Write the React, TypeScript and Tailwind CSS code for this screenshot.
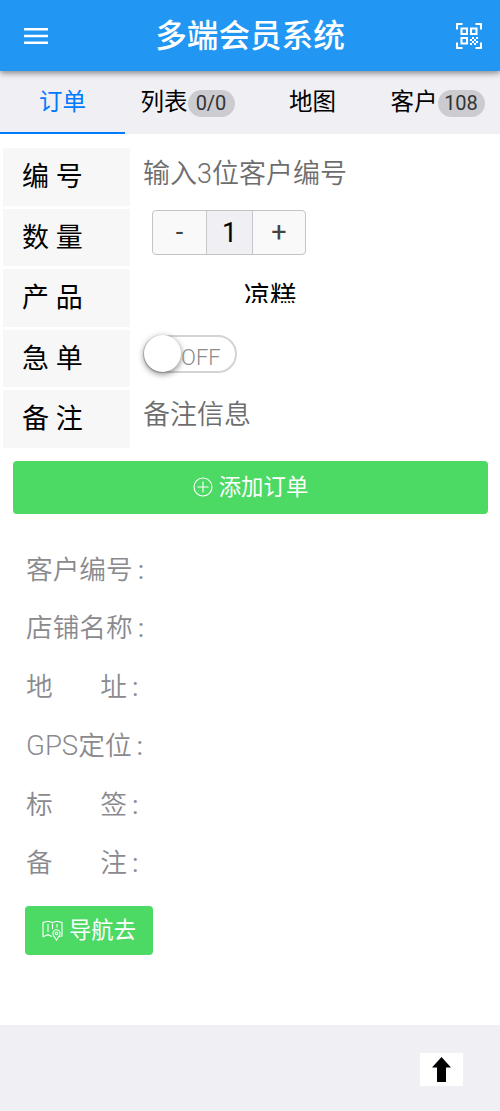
import React from 'react';

const tabs = [
  { name: '订单' },
  { name: '列表', badge: '0/0' },
  { name: '地图' },
  { name: '客户', badge: '108' }
];

const details = ['客户编号', '店铺名称', '地址', 'GPS定位', '标签', '备注'];

function MenuIcon() {
  return (
    <svg className="w-6 h-4" viewBox="0 0 24 16" fill="#fff">
      <path d="M0 0h24v2.4H0zM0 6.8h24v2.4H0zM0 13.6h24V16H0z" />
    </svg>
  );
}

function QrIcon() {
  return (
    <svg className="w-[26px] h-[26px]" viewBox="0 0 26 26" fill="none" stroke="#fff" strokeWidth="2.1">
      <path d="M1 6.5V1h5.5M19.5 1H25v5.5M25 19.5V25h-5.5M6.5 25H1v-5.5" />
      <path d="M5.5 5.5H11V11H5.5zM15 5.5h5.5V11H15zM5.5 15H11v5.5H5.5z" />
      <path
        d="M16 14h2v2h-2zM20 14h2v2h-2zM14 16h2v2h-2zM18 16h2v2h-2zM16 18h2v2h-2zM20 18h2v2h-2zM14 20h2v2h-2zM18 20h2v2h-2z"
        fill="#fff"
        stroke="none"
      />
    </svg>
  );
}

function PlusCircleIcon() {
  return (
    <svg className="w-5 h-5" viewBox="0 0 20 20" fill="none" stroke="#fff" strokeWidth="1.1">
      <circle cx="10" cy="10" r="9" />
      <path d="M10 4.5v11M4.5 10h11" />
    </svg>
  );
}

function MapIcon() {
  return (
    <svg className="w-[21px] h-[21px]" viewBox="0 0 21 21" fill="none" stroke="#fff" strokeWidth="1.1">
      <path d="M10 16.5l-4-1.8-5 2V2.5l5-1.2 4.5 1.2L15 1.3l5 1.2V16l-2.5.3" />
      <path d="M6 4v8M10.5 3.5v5.5M15 4v3.5" />
      <path d="M14.5 20.2c-1.2-2.4-3.6-4.4-3.6-6.8a3.6 3.6 0 0 1 7.2 0c0 2.4-2.4 4.4-3.6 6.8z" />
      <circle cx="14.5" cy="13.3" r="1.3" />
    </svg>
  );
}

interface FormRowProps {
  label: string;
  children: React.ReactNode;
}

function FormRow({ label, children }: FormRowProps) {
  return (
    <div className="flex h-[57.5px]">
      <div className="w-[127px] shrink-0 bg-[#f7f7f7] pl-[19px] text-black leading-[59px] whitespace-pre">
        {label}
      </div>
      <div className="flex-1 pl-[13px]">{children}</div>
    </div>
  );
}

function App() {
  return (
    <div className="w-full h-[1111px] flex flex-col bg-white overflow-hidden font-[Roboto,'Noto_Sans_CJK_SC',sans-serif]">
      {/* Header */}
      <header className="relative z-10 h-[71px] shrink-0 flex items-center justify-between pl-6 pr-[18px] bg-[#2196f3] shadow-[0_2px_6px_rgba(0,0,0,0.45)]">
        <MenuIcon />
        <h1 className="-ml-[4px] pt-[2px] text-[31.6px] leading-[71px] font-medium text-white">多端会员系统</h1>
        <QrIcon />
      </header>

      {/* Tabs */}
      <nav className="h-[63px] shrink-0 grid grid-cols-4 bg-[#efeff4]">
        {tabs.map((tab, index) => (
          <div
            key={tab.name}
            className={`h-[63px] flex justify-center text-[23.5px] leading-[62px] border-b-2 ${
              index === 0 ? 'text-[#007aff] border-[#007aff]' : 'text-black border-transparent'
            }`}
          >
            {tab.name}
            {tab.badge && (
              <span className="mt-[19px] h-[27px] w-[47px] rounded-full bg-[#cbcbd0] text-center text-[20px] leading-[27px] text-[#333]">
                {tab.badge}
              </span>
            )}
          </div>
        ))}
      </nav>

      {/* Order form */}
      <section className="mt-[14px] pl-[3px] flex flex-col gap-[3px] text-[27px]">
        <FormRow label="编 号">
          <div className="leading-[52px] text-[#6d6d6d] font-[350]">输入3位客户编号</div>
        </FormRow>
        <FormRow label="数 量">
          <div className="mt-[1px] ml-[9px] w-[154px] h-[45px] flex border border-[#c4c4c6] rounded-[4px] bg-[#f9f9f9] overflow-hidden text-center leading-[43px]">
            <button className="w-[53px] text-[#444]">-</button>
            <div className="w-[47px] border-x border-[#c8c8cc] bg-[#efeff4] text-black leading-[45px]">1</div>
            <button className="flex-1 text-[#444]">+</button>
          </div>
        </FormRow>
        <FormRow label="产 品">
          <div className="h-[34px] pt-[4px] pr-[103px] text-center text-[26.5px] leading-[46px] text-black overflow-hidden">凉糕</div>
        </FormRow>
        <FormRow label="急 单">
          <div className="mt-[5px] w-[94px] h-[38px] flex items-center border-2 border-[#d4d4d4] rounded-full">
            <div className="-ml-[1px] w-[37px] h-[37px] shrink-0 rounded-full bg-white shadow-[0_2px_6px_rgba(0,0,0,0.5)]" />
            <span className="pt-[8px] text-[22px] leading-[30px] font-[350] text-[#8c8c8c]">OFF</span>
          </div>
        </FormRow>
        <FormRow label="备 注">
          <div className="leading-[50px] text-[#6d6d6d] font-[350]">备注信息</div>
        </FormRow>
      </section>

      <button className="mt-[13px] ml-[13px] mr-3 h-[53px] shrink-0 flex items-center justify-center gap-[6px] rounded-[4px] bg-[#4cd964] text-white text-[22.4px]">
        <PlusCircleIcon />
        <span className="pt-[1px]">添加订单</span>
      </button>

      {/* Customer details */}
      <section className="mt-[27px] pl-[26px] text-[26.7px] font-[350] text-[#8a8a8e]">
        {details.map((name) => (
          <div key={name} className="flex h-[58.8px] leading-[58.8px]">
            {name.length === 2 ? (
              <span className="w-[101px] flex justify-between">
                <span>{name[0]}</span>
                <span>{name[1]}</span>
              </span>
            ) : name.startsWith('GPS') ? (
              <span>
                <span className="text-[27.6px]">GPS</span>
                {name.slice(3)}
              </span>
            ) : (
              <span>{name}</span>
            )}
            <span className="ml-[5px] font-normal">:</span>
          </div>
        ))}
        <button className="-ml-[1px] mt-[13px] w-[128px] h-[49px] flex items-center justify-center gap-[6px] rounded-[4px] bg-[#4cd964] text-white text-[22.3px] font-normal">
          <MapIcon />
          <span>导航去</span>
        </button>
      </section>

      {/* Back to top */}
      <footer className="mt-auto h-[86px] shrink-0 flex justify-end pt-[28px] pr-[37px] bg-[#efeff4]">
        <div className="w-[43px] h-[33px] flex items-center justify-center bg-white">
          <svg className="w-[19px] h-[25px]" viewBox="0 0 19 25" fill="#000">
            <path d="M9.5 0L19 10.5h-5V25H5V10.5H0z" />
          </svg>
        </div>
      </footer>
    </div>
  );
}

export default App;
